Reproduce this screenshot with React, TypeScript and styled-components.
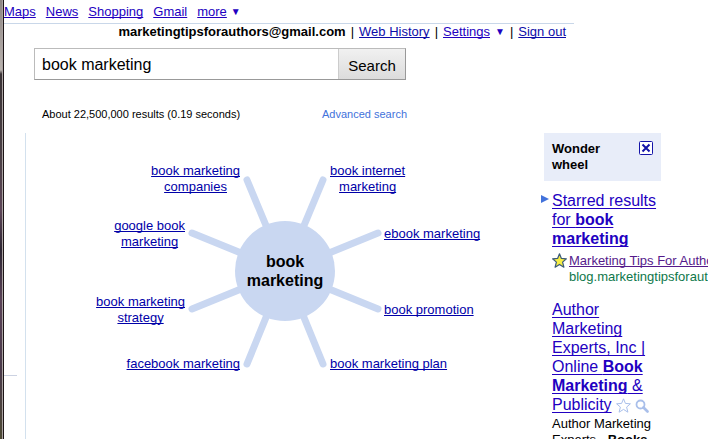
import React from "react";
import styled, { createGlobalStyle, css } from "styled-components";

const GlobalStyle = createGlobalStyle`
  *, *::before, *::after { box-sizing: border-box; }
  body {
    margin: 0;
    background: #fff;
    color: #000;
    font: 13px/16px "Liberation Sans", Arial, sans-serif;
  }
`;

const Shell = styled.div`
  display: flex;
  height: 100vh;
  overflow: hidden;
`;

const WindowEdge = styled.div`
  flex: 0 0 4px;
  border-right: 1px solid #1c1416;
  background: linear-gradient(
    #8d8583 0,
    #b9b2ae 70px,
    #3a3336 74px,
    #4b4046 160px,
    #5d4658 210px,
    #2c2532 250px,
    #5a4358 300px,
    #4a3a4a 370px,
    #4d4a35 100%
  );
  box-shadow: inset -1px 0 #aaa3a2;
`;

const Page = styled.div`
  flex: 1;
  min-width: 0;
  display: flex;
  flex-direction: column;
`;

const TextLink = styled.a<{ $tone?: string }>`
  color: ${(p) => p.$tone ?? "#2200c1"};
  text-decoration: underline;
  text-decoration-thickness: 1px;
  text-decoration-skip-ink: none;
  text-underline-offset: 1px;
`;

const Caret = styled.span`
  color: #2200c1;
  font-size: 10px;
`;

const Header = styled.header`
  margin-right: 134px;
`;

const Nav = styled.nav`
  display: flex;
  align-items: center;
  gap: 10px;
  height: 24px;
  border-bottom: 1px solid #c9d7e9;
`;

const MoreItem = styled.span`
  display: flex;
  align-items: center;
  gap: 4px;
`;

const Account = styled.div`
  display: flex;
  justify-content: flex-end;
  align-items: center;
  gap: 5px;
  padding-right: 8px;
  white-space: nowrap;
`;

const SearchForm = styled.form`
  display: flex;
  width: 372px;
  margin: 8px 0 0 30px;
  border: 1px solid #bbb;
  border-right-color: #999;
  border-bottom-color: #999;
`;

const SearchInput = styled.input`
  flex: 1;
  min-width: 0;
  height: 30px;
  padding: 2px 7px 0;
  border: 0;
  border-right: 1px solid #ccc;
  outline: 0;
  background: #fff;
  color: #000;
  font: 16px "Liberation Sans", Arial, sans-serif;
`;

const SearchButton = styled.button`
  width: 66px;
  padding: 3px 0 0;
  border: 0;
  background: linear-gradient(#f1f1f1, #dcdcdc);
  color: #000;
  font: 15px "Liberation Sans", Arial, sans-serif;
`;

const Stats = styled.div`
  display: flex;
  justify-content: space-between;
  width: 365px;
  margin: 26px 0 11px 38px;
  font-size: 11px;
`;

const AdvancedLink = styled.a`
  color: #4272db;
  text-decoration: none;
`;

const Main = styled.main`
  flex: 1;
  min-height: 0;
  display: grid;
  grid-template-columns: 22px minmax(0, 1fr) 164px;
`;

const Rail = styled.div`
  padding-top: 242px;
  border-right: 1px solid #d3e1ee;
`;

const RailRule = styled.hr`
  width: 13px;
  margin: 0;
  border: 0;
  border-top: 1px solid #ccd2e2;
`;

const WheelArea = styled.section`
  display: flex;
  justify-content: center;
`;

const Wheel = styled.div`
  position: relative;
  flex: 0 0 400px;
  height: 276px;
`;

const Hub = styled.h2`
  position: absolute;
  left: 150px;
  top: 88px;
  display: flex;
  align-items: center;
  justify-content: center;
  width: 100px;
  height: 100px;
  margin: 0;
  border-radius: 50%;
  background: #c9d7f1;
  font-size: 16px;
  line-height: 19px;
  text-align: center;
`;

const WheelLabel = styled(TextLink)<{
  $side: "left" | "right";
  $reach: number;
  $y: number;
}>`
  position: absolute;
  top: ${(p) => p.$y}px;
  transform: translateY(-50%);
  text-align: center;
  white-space: pre-line;
  ${(p) =>
    p.$side === "left"
      ? css`right: ${p.$reach}px;`
      : css`left: ${p.$reach}px;`}
`;

const Sidebar = styled.aside`
  white-space: nowrap;
`;

const ToolBox = styled.div`
  display: flex;
  justify-content: space-between;
  align-items: flex-start;
  width: 117px;
  height: 48px;
  padding: 8px;
  background: #e8edf9;
`;

const ToolTitle = styled.h3`
  width: 60px;
  margin: 0;
  font-size: 13px;
  line-height: 16px;
  white-space: normal;
`;

const CloseButton = styled.button`
  display: block;
  width: 14px;
  height: 14px;
  padding: 0;
  border: 0;
  background: none;

  svg { display: block; }
`;

const Result = styled.article<{ $gap: number }>`
  position: relative;
  padding-left: 8px;
  margin-top: ${(p) => p.$gap}px;
`;

const Marker = styled.svg`
  position: absolute;
  left: -3px;
  top: 4px;
`;

const ResultTitle = styled.h3`
  width: 109px;
  margin: 0;
  font-size: 16px;
  font-weight: 400;
  line-height: 19px;
  white-space: normal;

  a { text-underline-offset: 2px; }
  svg { margin-left: 4px; vertical-align: -3px; }
`;

const Starred = styled.div`
  display: grid;
  grid-template-columns: 15px auto;
  column-gap: 2px;
  margin-top: 5px;
`;

const SiteUrl = styled.cite`
  grid-column: 2;
  color: #0e774a;
  font-style: normal;
`;

const Snippet = styled.p`
  width: 109px;
  margin: 2px 0 0;
  line-height: 16px;
  white-space: normal;
`;

const STAR = "M7.5 0.8 L9.4 5.4 L14.4 5.8 L10.6 9.1 L11.9 14.2 L7.5 11.4 L3.1 14.2 L4.4 9.1 L0.6 5.8 L5.6 5.4 Z";

const spokes = [
  [162, 47],
  [238, 47],
  [107, 100],
  [293, 100],
  [107, 176],
  [293, 176],
  [162, 231],
  [238, 231],
];

const labels: {
  text: string;
  side: "left" | "right";
  reach: number;
  y: number;
}[] = [
  { text: "book marketing\ncompanies", side: "left", reach: 245, y: 46 },
  { text: "book internet\nmarketing", side: "right", reach: 245, y: 46 },
  { text: "google book\nmarketing", side: "left", reach: 300, y: 101 },
  { text: "ebook marketing", side: "right", reach: 299, y: 101 },
  { text: "book marketing\nstrategy", side: "left", reach: 300, y: 177 },
  { text: "book promotion", side: "right", reach: 299, y: 177 },
  { text: "facebook marketing", side: "left", reach: 245, y: 231 },
  { text: "book marketing plan", side: "right", reach: 245, y: 231 },
];

function Spokes() {
  return (
    <svg width="400" height="276" aria-hidden="true">
      <g stroke="#c9d7f1" strokeWidth="7" strokeLinecap="round">
        {spokes.map(([x, y]) => (
          <line key={`${x}-${y}`} x1="200" y1="138" x2={x} y2={y} />
        ))}
      </g>
    </svg>
  );
}

export default function App() {
  return (
    <>
      <GlobalStyle />
      <Shell>
        <WindowEdge />
        <Page>
          <Header>
            <Nav>
              <TextLink href="#maps">Maps</TextLink>
              <TextLink href="#news">News</TextLink>
              <TextLink href="#shopping">Shopping</TextLink>
              <TextLink href="#gmail">Gmail</TextLink>
              <MoreItem>
                <TextLink href="#more">more</TextLink>
                <Caret>▼</Caret>
              </MoreItem>
            </Nav>
            <Account>
              <b>marketingtipsforauthors@gmail.com</b>
              <span>|</span>
              <TextLink $tone="#0c0ca8" href="#history">Web History</TextLink>
              <span>|</span>
              <TextLink href="#settings">Settings</TextLink>
              <Caret>▼</Caret>
              <span>|</span>
              <TextLink $tone="#0c0ca8" href="#signout">Sign out</TextLink>
            </Account>
          </Header>

          <SearchForm role="search" onSubmit={(e) => e.preventDefault()}>
            <SearchInput aria-label="Search" defaultValue="book marketing" />
            <SearchButton type="submit">Search</SearchButton>
          </SearchForm>
          <Stats>
            <span>About 22,500,000 results (0.19 seconds)</span>
            <AdvancedLink href="#advanced">Advanced search</AdvancedLink>
          </Stats>

          <Main>
            <Rail>
              <RailRule />
            </Rail>
            <WheelArea>
              <Wheel>
                <Spokes />
                <Hub>
                  book
                  <br />
                  marketing
                </Hub>
                {labels.map((l) => (
                  <WheelLabel
                    key={l.text}
                    href="#wheel"
                    $tone="#0000a8"
                    $side={l.side}
                    $reach={l.reach}
                    $y={l.y}
                  >
                    {l.text}
                  </WheelLabel>
                ))}
              </Wheel>
            </WheelArea>
            <Sidebar>
              <ToolBox>
                <ToolTitle>Wonder wheel</ToolTitle>
                <CloseButton type="button" aria-label="Close">
                  <svg width="14" height="14" viewBox="0 0 14 14">
                    <rect x="0.5" y="0.5" width="13" height="13" rx="1" fill="#fff" stroke="#1414a8" />
                    <path d="M3.5 3.5 L10.5 10.5 M10.5 3.5 L3.5 10.5" stroke="#1414a8" strokeWidth="2" />
                  </svg>
                </CloseButton>
              </ToolBox>

              <Result $gap={10}>
                <Marker width="8" height="8" viewBox="0 0 8 8" aria-hidden="true">
                  <path d="M0 0 L8 4 L0 8 Z" fill="#4272db" />
                </Marker>
                <ResultTitle>
                  <TextLink href="#starred">
                    Starred results for <b>book marketing</b>
                  </TextLink>
                </ResultTitle>
                <Starred>
                  <svg width="15" height="15" viewBox="0 0 15 15" aria-hidden="true">
                    <path d={STAR} fill="#f6ee45" stroke="#3b5a78" strokeWidth="1.2" strokeLinejoin="round" />
                  </svg>
                  <TextLink $tone="#551a8b" href="#tips">Marketing Tips For Authors</TextLink>
                  <SiteUrl>blog.marketingtipsforauthors.com</SiteUrl>
                </Starred>
              </Result>

              <Result $gap={15}>
                <ResultTitle>
                  <TextLink href="#ame">
                    Author Marketing Experts, Inc | Online <b>Book Marketing</b> &amp; Publicity
                  </TextLink>
                  <svg width="15" height="15" viewBox="0 0 15 15" aria-hidden="true">
                    <path d={STAR} fill="#fff" stroke="#a9bfea" strokeLinejoin="round" />
                  </svg>
                  <svg width="14" height="14" viewBox="0 0 14 14" fill="none" stroke="#a9bfea" aria-hidden="true">
                    <circle cx="5.5" cy="5.5" r="4" strokeWidth="1.8" />
                    <path d="M8.5 8.5 L12.5 12.5" strokeWidth="2.6" strokeLinecap="round" />
                  </svg>
                </ResultTitle>
                <Snippet>
                  Author Marketing Experts - <b>Books</b>
                </Snippet>
              </Result>
            </Sidebar>
          </Main>
        </Page>
      </Shell>
    </>
  );
}
